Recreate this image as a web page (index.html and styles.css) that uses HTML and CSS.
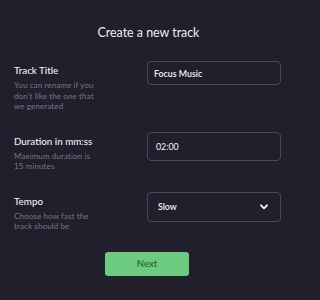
FILE: index.html
```html
<!DOCTYPE html>
<html>
<head>
<meta charset="utf-8">
<link rel="stylesheet" href="styles.css">
</head>
<body>
<main class="page">
  <h1 class="title">Create a new track</h1>
  <div class="row">
    <div class="info">
      <div class="label">Track Title</div>
      <div class="desc">You can rename if you<br>don't like the one that<br>we generated</div>
    </div>
    <div class="field field-title"><span class="val val-bold">Focus Music</span></div>
  </div>
  <div class="row">
    <div class="info">
      <div class="label">Duration in mm:ss</div>
      <div class="desc">Maximum duration is<br>15 minutes</div>
    </div>
    <div class="field field-dur"><span class="val">02:00</span></div>
  </div>
  <div class="row">
    <div class="info">
      <div class="label">Tempo</div>
      <div class="desc">Choose how fast the<br>track should be</div>
    </div>
    <div class="field field-select">
      <span class="val val-bold">Slow</span>
      <svg class="chev" width="8" height="6" viewBox="0 0 8 6"><path d="M1 1.3 L4 4.3 L7 1.3" fill="none" stroke="#ffffff" stroke-width="1.8" stroke-linecap="round" stroke-linejoin="round"/></svg>
    </div>
  </div>
  <div class="actions">
    <button class="next">Next</button>
  </div>
</main>
</body>
</html>
```
FILE: styles.css
```css
html, body {
  margin: 0;
  padding: 0;
  background: #221f2d;
}
body {
  font-family: Lato, "Open Sans", sans-serif;
  color: #f1f0f6;
  width: 297px;
  height: 300px;
  overflow: hidden;
}
.page {
  padding: 24px 16px 0 14px;
  display: flex;
  flex-direction: column;
  gap: 20px;
}
.title {
  margin: 0;
  font-size: 12.4px;
  line-height: 17px;
  font-weight: 400;
  text-align: center;
  padding-left: 2px;
  color: #eeedf3;
}
.row {
  display: grid;
  grid-template-columns: 133px 134px;
  align-items: start;
}
.info {
  padding-top: 3px;
}
.label {
  font-size: 9.8px;
  line-height: 13px;
  font-weight: 500;
  color: #f1f0f6;
}
.desc {
  margin-top: 3px;
  font-size: 8px;
  line-height: 10.5px;
  letter-spacing: 0.12px;
  color: #767487;
}
.field {
  box-sizing: border-box;
  border: 1px solid #4a4858;
  border-radius: 4px;
  display: flex;
  align-items: center;
  font-size: 8.8px;
  color: #f3f2f7;
}
.field-title { height: 24px; padding-left: 6px; }
.field-dur { height: 29px; padding-left: 8px; }
.field-select { height: 30px; padding: 0 12px 0 10px; justify-content: space-between; }
.val-bold { font-weight: 600; }
.chev { display: block; }
.actions {
  display: flex;
  justify-content: center;
  padding-right: 1px;
}
.next {
  width: 84px;
  height: 24px;
  border: none;
  border-radius: 3px;
  background: #6ccb7f;
  color: #2a5b34;
  font-family: Lato, sans-serif;
  font-size: 9.5px;
  font-weight: 500;
  padding: 0;
}
```
